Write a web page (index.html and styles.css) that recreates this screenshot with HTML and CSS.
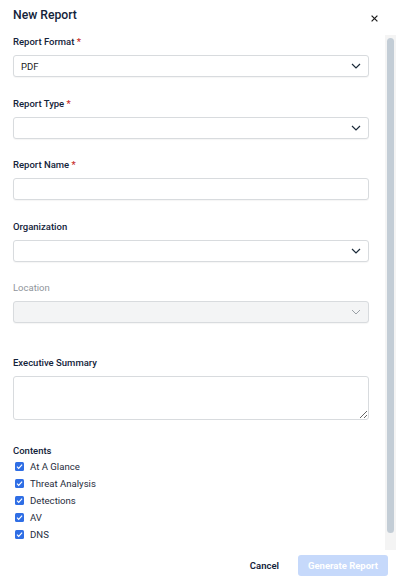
FILE: index.html
```
<!DOCTYPE html>
<html lang="en">
<head>
    <meta charset="UTF-8">
    <meta name="viewport" content="width=device-width, initial-scale=1.0">
    <title>New Report</title>
    <link rel="stylesheet" href="styles.css">
</head>
<body>
    <div class="dialog">
        <div class="dialog-header">
            <h2>New Report</h2>
            <span class="close-button">
                <svg viewBox="0 0 7 7" width="7" height="7"><path d="M0.6 0.6l5.8 5.8M6.4 0.6l-5.8 5.8" stroke="currentColor" stroke-width="1.2"/></svg>
            </span>
        </div>

        <div class="dialog-main">
            <div class="dialog-body">
                <div class="field">
                    <label>Report Format <span class="req">*</span></label>
                    <div class="select">
                        <span>PDF</span>
                        <svg viewBox="0 0 10 6" width="10" height="6"><path d="M1 1l4 4 4-4" fill="none" stroke="currentColor" stroke-width="1.2"/></svg>
                    </div>
                </div>

                <div class="field">
                    <label>Report Type <span class="req">*</span></label>
                    <div class="select">
                        <span></span>
                        <svg viewBox="0 0 10 6" width="10" height="6"><path d="M1 1l4 4 4-4" fill="none" stroke="currentColor" stroke-width="1.2"/></svg>
                    </div>
                </div>

                <div class="field">
                    <label>Report Name <span class="req">*</span></label>
                    <input type="text" class="text-input">
                </div>

                <div class="field">
                    <label>Organization</label>
                    <div class="select">
                        <span></span>
                        <svg viewBox="0 0 10 6" width="10" height="6"><path d="M1 1l4 4 4-4" fill="none" stroke="currentColor" stroke-width="1.2"/></svg>
                    </div>
                </div>

                <div class="field field-spaced disabled">
                    <label>Location</label>
                    <div class="select">
                        <span></span>
                        <svg viewBox="0 0 10 6" width="10" height="6"><path d="M1 1l4 4 4-4" fill="none" stroke="currentColor" stroke-width="1"/></svg>
                    </div>
                </div>

                <div class="field">
                    <label>Executive Summary</label>
                    <textarea class="summary"></textarea>
                </div>

                <div class="contents">
                    <label>Contents</label>
                    <ul class="check-list">
                        <li><span class="check"><svg viewBox="0 0 9 9" width="9" height="9"><path d="M2 4.6l1.7 1.7 3.4-3.6" fill="none" stroke="#fff" stroke-width="1.2"/></svg></span>At A Glance</li>
                        <li><span class="check"><svg viewBox="0 0 9 9" width="9" height="9"><path d="M2 4.6l1.7 1.7 3.4-3.6" fill="none" stroke="#fff" stroke-width="1.2"/></svg></span>Threat Analysis</li>
                        <li><span class="check"><svg viewBox="0 0 9 9" width="9" height="9"><path d="M2 4.6l1.7 1.7 3.4-3.6" fill="none" stroke="#fff" stroke-width="1.2"/></svg></span>Detections</li>
                        <li><span class="check"><svg viewBox="0 0 9 9" width="9" height="9"><path d="M2 4.6l1.7 1.7 3.4-3.6" fill="none" stroke="#fff" stroke-width="1.2"/></svg></span>AV</li>
                        <li><span class="check"><svg viewBox="0 0 9 9" width="9" height="9"><path d="M2 4.6l1.7 1.7 3.4-3.6" fill="none" stroke="#fff" stroke-width="1.2"/></svg></span>DNS</li>
                    </ul>
                </div>
            </div>

            <div class="scrollbar">
                <div class="scrollbar-thumb"></div>
            </div>
        </div>

        <div class="dialog-footer">
            <button class="cancel-btn">Cancel</button>
            <button class="generate-btn" disabled>Generate Report</button>
        </div>
    </div>
</body>
</html>
```

FILE: styles.css
```
* {
    box-sizing: border-box;
    margin: 0;
    padding: 0;
}

body {
    font-family: Roboto, 'Noto Sans', sans-serif;
    background: #ffffff;
    color: #13233a;
    width: 396px;
    height: 581px;
    overflow: hidden;
}

.dialog {
    display: flex;
    flex-direction: column;
    height: 581px;
}

.dialog-header {
    height: 35px;
    display: flex;
    justify-content: space-between;
    align-items: flex-start;
    padding: 7px 18px 0 13px;
}

.dialog-header h2 {
    font-size: 12.2px;
    font-weight: 500;
    line-height: 17px;
}

.close-button {
    display: flex;
    margin-top: 8px;
    color: #1a1a1a;
}

.dialog-main {
    height: 515px;
    display: flex;
}

.dialog-body {
    flex: 1;
    overflow: hidden;
    padding: 0 16px 0 13px;
}

/* fake scrollbar, headless hides the real one */
.scrollbar {
    width: 11px;
    background: #f4f4f4;
    padding: 3px 2px 17px;
}

.scrollbar-thumb {
    height: 100%;
    background: #c3cdd6;
    border-radius: 4px;
}

.field {
    margin-bottom: 19.5px;
}

.field-spaced {
    margin-bottom: 33px;
}

label {
    display: block;
    font-size: 9.5px;
    font-weight: 500;
    line-height: 13px;
    margin-bottom: 7px;
}

.req {
    color: #c62828;
}

.select,
.text-input {
    width: 100%;
    height: 22px;
    border: 1px solid #d8dbde;
    border-radius: 3px;
    background: #fff;
    box-shadow: 0 1px 1px rgba(0, 0, 0, 0.04);
}

.select {
    display: flex;
    align-items: center;
    justify-content: space-between;
    padding: 0 7px 0 7px;
    font-size: 9.5px;
    color: #1a1a1a;
}

.select svg {
    color: #1c2b3a;
}

.text-input {
    display: block;
    outline: none;
    font-family: inherit;
}

.disabled label {
    color: #8f959b;
    font-weight: 400;
}

.disabled .select {
    background: #f3f4f5;
}

.disabled .select svg {
    color: #9aa0a6;
}

.summary {
    display: block;
    width: 100%;
    height: 44px;
    border: 1px solid #d8dbde;
    border-radius: 3px;
    resize: vertical;
    outline: none;
    font-family: inherit;
}

.contents {
    margin-top: 23.5px;
}

.contents label {
    margin-bottom: 2px;
}

.check-list {
    list-style: none;
}

.check-list li {
    display: flex;
    align-items: center;
    height: 16.8px;
    font-size: 9.6px;
    color: #1f2d3d;
    padding-left: 2px;
}

.check {
    width: 9px;
    height: 9px;
    border-radius: 1.5px;
    background: #2f6ee5;
    margin-right: 6px;
    display: flex;
}

.dialog-footer {
    flex: 1;
    display: flex;
    align-items: center;
    justify-content: flex-end;
    gap: 19px;
    padding: 0 8px 0 0;
}

.cancel-btn {
    background: none;
    border: none;
    font-family: inherit;
    font-size: 9.5px;
    font-weight: 600;
    color: #13233a;
}

.generate-btn {
    height: 21px;
    padding: 0 10px;
    background: #c6d9fb;
    color: #fff;
    border: none;
    border-radius: 3px;
    font-family: inherit;
    font-size: 9.5px;
    font-weight: 700;
}
```
